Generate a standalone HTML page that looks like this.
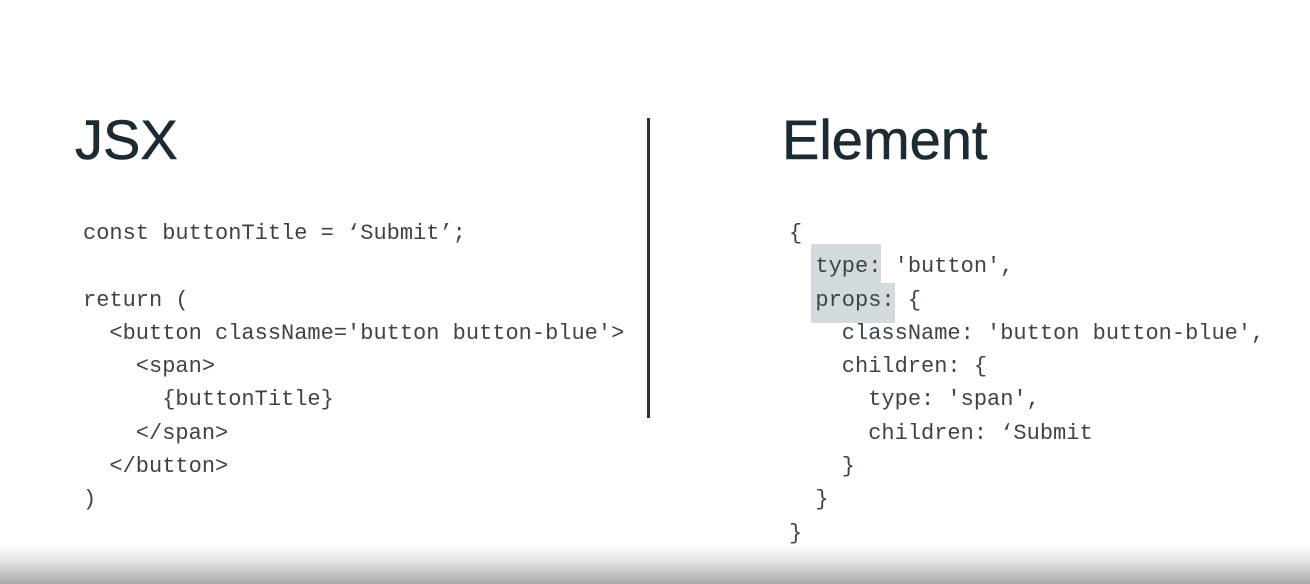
<!DOCTYPE html>
<html><head><style>
html,body{margin:0;padding:0}
body{width:1310px;height:584px;position:relative;overflow:hidden;background:#fff;font-family:"Liberation Sans",sans-serif}
.h{position:absolute;font-size:56px;color:#1c2b33;line-height:1;top:112px;-webkit-text-stroke:0.6px #1c2b33}
.code{position:absolute;font-family:"Liberation Mono",monospace;font-size:22px;line-height:33.3px;color:#3c4449;white-space:pre;margin:0;z-index:2}
.hl{position:absolute;background:#d3dade}
.div{position:absolute;left:647px;top:118px;width:3px;height:300px;background:#2a3338}
.grad{position:absolute;left:0;right:0;top:545px;bottom:0;background:linear-gradient(#fff,#e4e4e4 40%,#a9a9a9)}
</style></head><body>
<div class="h" style="left:75px">JSX</div>
<div class="h" style="left:782px">Element</div>
<div class="div"></div>
<div class="hl" style="left:811px;top:244px;width:70px;height:40px"></div>
<div class="hl" style="left:811px;top:283px;width:84px;height:40px"></div>
<pre class="code" style="left:83px;top:217px">const buttonTitle = ‘Submit’;

return (
  &lt;button className='button button-blue'&gt;
    &lt;span&gt;
      {buttonTitle}
    &lt;/span&gt;
  &lt;/button&gt;
)</pre>
<pre class="code" style="left:789px;top:217px">{
  type: 'button',
  props: {
    className: 'button button-blue',
    children: {
      type: 'span',
      children: ‘Submit
    }
  }
}</pre>
<div class="grad"></div>
</body></html>
